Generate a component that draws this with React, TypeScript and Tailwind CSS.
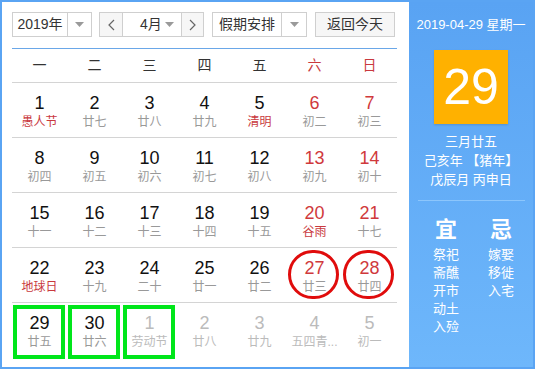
import React from 'react'

type Day = {
  d: number
  lunar: string
  other?: boolean
  weekend?: boolean
  festival?: boolean
  ring?: boolean
  pick?: boolean
}

const rows: Day[][] = [
  [
    { d: 1, lunar: '愚人节', festival: true },
    { d: 2, lunar: '廿七' },
    { d: 3, lunar: '廿八' },
    { d: 4, lunar: '廿九' },
    { d: 5, lunar: '清明', festival: true },
    { d: 6, lunar: '初二', weekend: true },
    { d: 7, lunar: '初三', weekend: true },
  ],
  [
    { d: 8, lunar: '初四' },
    { d: 9, lunar: '初五' },
    { d: 10, lunar: '初六' },
    { d: 11, lunar: '初七' },
    { d: 12, lunar: '初八' },
    { d: 13, lunar: '初九', weekend: true },
    { d: 14, lunar: '初十', weekend: true },
  ],
  [
    { d: 15, lunar: '十一' },
    { d: 16, lunar: '十二' },
    { d: 17, lunar: '十三' },
    { d: 18, lunar: '十四' },
    { d: 19, lunar: '十五' },
    { d: 20, lunar: '谷雨', weekend: true, festival: true },
    { d: 21, lunar: '十七', weekend: true },
  ],
  [
    { d: 22, lunar: '地球日', festival: true },
    { d: 23, lunar: '十九' },
    { d: 24, lunar: '二十' },
    { d: 25, lunar: '廿一' },
    { d: 26, lunar: '廿二' },
    { d: 27, lunar: '廿三', weekend: true, ring: true },
    { d: 28, lunar: '廿四', weekend: true, ring: true },
  ],
  [
    { d: 29, lunar: '廿五', pick: true },
    { d: 30, lunar: '廿六', pick: true },
    { d: 1, lunar: '劳动节', other: true, pick: true },
    { d: 2, lunar: '廿八', other: true },
    { d: 3, lunar: '廿九', other: true },
    { d: 4, lunar: '五四青...', other: true },
    { d: 5, lunar: '初一', other: true },
  ],
]

const weekdays = ['一', '二', '三', '四', '五', '六', '日']

const Caret = () => (
  <svg width="9" height="5" viewBox="0 0 9 5">
    <path d="M0 0h9L4.5 5z" fill="#9a9a9a" />
  </svg>
)

const Chevron = ({ dir }: { dir: 'l' | 'r' }) => (
  <svg width="7" height="12" viewBox="0 0 7 12">
    <path
      d={dir === 'l' ? 'M6 1L1 6l5 5' : 'M1 1l5 5-5 5'}
      fill="none"
      stroke="#666"
      strokeWidth="1.2"
    />
  </svg>
)

function Cell({ day }: { day: Day }) {
  const numColor = day.other ? 'text-[#bbbbbb]' : day.weekend ? 'text-[#d0393c]' : 'text-[#111]'
  const lunarColor = day.other
    ? 'text-[#bbbbbb]'
    : day.festival
      ? 'text-[#c9393e]'
      : 'text-[#999999]'

  return (
    <div className="relative flex flex-col items-center pt-[10px]">
      <span className={`text-[18px] leading-[20px] ${numColor}`}>{day.d}</span>
      <span className={`mt-[1px] text-[12px] leading-[16px] whitespace-nowrap ${lunarColor}`}>
        {day.lunar}
      </span>

      {day.ring && (
        <div className="absolute left-[1px] top-[2px] w-[51px] h-[49px] rounded-full border-[3px] border-[#e00c0c]" />
      )}
      {day.pick && (
        <div className="absolute left-[1px] right-[2px] top-[2px] bottom-[-1px] border-[4px] border-[#00e61a]" />
      )}
    </div>
  )
}

export default function App() {
  return (
    <div className="w-[535px] h-[369px] border-2 border-[#5aa4f3] flex overflow-hidden bg-white font-['Liberation_Sans','Noto_Sans_CJK_SC',sans-serif]">

      {/* Calendar */}
      <div className="w-[407px] pl-[10px] pt-[10px]">

        {/* Toolbar */}
        <div className="flex h-[25px] text-[14px] text-[#333]">
          <div className="w-[80px] flex border border-[#cfcfcf]">
            <span className="flex-1 flex items-center justify-center">2019年</span>
            <span className="w-[24px] flex items-center justify-center border-l border-[#cfcfcf]">
              <Caret />
            </span>
          </div>

          <div className="ml-[7px] w-[105px] flex border border-[#cfcfcf]">
            <span className="w-[23px] flex items-center justify-center bg-[#f6f6f6] border-r border-[#cfcfcf]">
              <Chevron dir="l" />
            </span>
            <span className="flex-1 flex items-center pl-[17px] pr-[7px]">
              <span className="flex-1">4月</span>
              <Caret />
            </span>
            <span className="w-[22px] flex items-center justify-center bg-[#f6f6f6] border-l border-[#cfcfcf]">
              <Chevron dir="r" />
            </span>
          </div>

          <div className="ml-[8px] w-[95px] flex border border-[#cfcfcf]">
            <span className="flex-1 flex items-center justify-center">假期安排</span>
            <span className="w-[25px] flex items-center justify-center border-l border-[#cfcfcf]">
              <Caret />
            </span>
          </div>

          <button className="ml-[8px] w-[80px] flex items-center justify-center border border-[#cfcfcf] bg-[#f6f6f6]">
            返回今天
          </button>
        </div>

        {/* Grid */}
        <div className="mt-[11px] w-[385px] border-t border-[#6aa7e8]">
          <div className="grid grid-cols-7 h-[34px] border-b border-[#d4d4d4] text-[14px]">
            {weekdays.map((w, i) => (
              <div
                key={w}
                className={`flex items-center justify-center ${i > 4 ? 'text-[#c9393e]' : 'text-[#333]'}`}
              >
                {w}
              </div>
            ))}
          </div>

          {rows.map((row, r) => (
            <div
              key={r}
              className={`grid grid-cols-7 h-[55px] ${r < rows.length - 1 ? 'border-b border-[#d4d4d4]' : ''}`}
            >
              {row.map((day, i) => (
                <Cell key={i} day={day} />
              ))}
            </div>
          ))}
        </div>
      </div>

      {/* Side panel */}
      <div className="flex-1 flex flex-col items-center bg-linear-to-b from-[#59a3f3] to-[#6eb7fb] text-white">
        <div className="mt-[15px] text-[13px] leading-[16px] whitespace-nowrap">2019-04-29 星期一</div>

        <div className="mt-[17px] w-[74px] h-[74px] bg-[#ffb100] flex items-center justify-center shadow-[0_1px_2px_rgba(0,0,0,0.15)]">
          <span className="text-[50px] leading-none">29</span>
        </div>

        <div className="mt-[8px] text-[13px] leading-[19px] text-center">
          <div>三月廿五</div>
          <div>己亥年 【猪年】</div>
          <div>戊辰月 丙申日</div>
        </div>

        <div className="mt-[11px] self-stretch ml-[9px] mr-[8px] h-px bg-[#8cc6fc]" />

        <div className="mt-[16px] self-start pl-[24px] flex gap-[29px]">
          <div className="flex flex-col items-center">
            <span className="text-[22px] leading-[26px] font-bold">宜</span>
            <div className="mt-[3px] text-[13px] leading-[18px]">
              <div>祭祀</div>
              <div>斋醮</div>
              <div>开市</div>
              <div>动土</div>
              <div>入殓</div>
            </div>
          </div>
          <div className="flex flex-col items-center">
            <span className="text-[22px] leading-[26px] font-bold">忌</span>
            <div className="mt-[3px] text-[13px] leading-[18px]">
              <div>嫁娶</div>
              <div>移徙</div>
              <div>入宅</div>
            </div>
          </div>
        </div>
      </div>
    </div>
  )
}
